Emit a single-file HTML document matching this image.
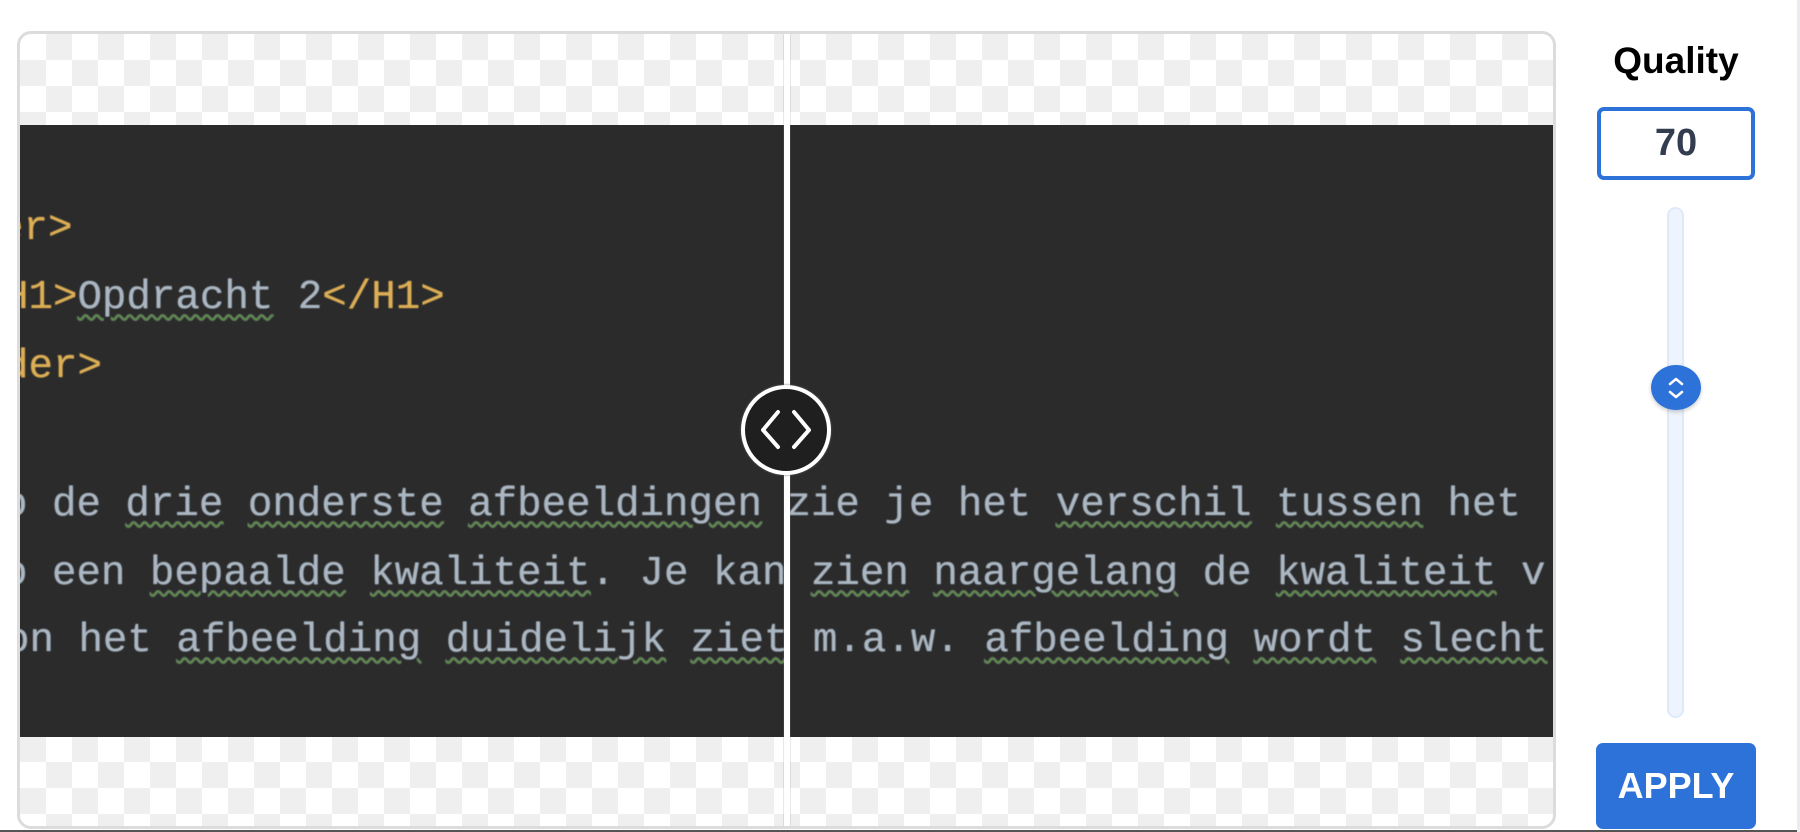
<!DOCTYPE html>
<html><head><meta charset="utf-8"><style>
html,body{margin:0;padding:0;width:1800px;height:832px;overflow:hidden;background:#fff;font-family:"Liberation Sans",sans-serif}
.box{position:absolute;left:17px;top:31px;width:1533px;height:792px;border:3px solid #dcdcdc;border-radius:14px;overflow:hidden;
background-color:#fff;background-image:linear-gradient(45deg,#efefef 25%,transparent 25%,transparent 75%,#efefef 75%),linear-gradient(45deg,#efefef 25%,transparent 25%,transparent 75%,#efefef 75%);background-size:52px 52px;background-position:0 0,26px 26px}
.dark{position:absolute;left:0;top:91px;width:100%;height:612px;background:#2b2b2b}
.t{position:absolute;font-family:"Liberation Mono",monospace;font-size:40.8px;white-space:pre;line-height:1;filter:blur(0.5px);font-weight:normal;text-shadow:0 0 1px currentColor}
.y{color:#dcae55}.g{color:#aab6c2}
.u{text-decoration:underline wavy #5c8a48;text-decoration-thickness:2px;text-underline-offset:6px}
.div{position:absolute;left:764px;top:0;width:6px;height:100%;background:#fff;box-shadow:0 0 1px #888}
.h{position:absolute;left:721px;top:351px;width:82px;height:82px;border-radius:50%;background:#1f1f1f;border:4px solid #fff;box-shadow:0 0 2px #666}
</style></head><body>
<div class="box">
<div class="dark">
<div class="t y" style="left:-21px;top:84px">er&gt;</div>
<div class="t y" style="left:-16px;top:153px">H1&gt;<span class="g u">Opdracht</span><span class="g"> 2</span>&lt;/H1&gt;</div>
<div class="t y" style="left:-16px;top:222px">der&gt;</div>
<div class="t g" style="left:-17px;top:360px">o de <span class="u">drie</span> <span class="u">onderste</span> <span class="u">afbeeldingen</span> zie je het <span class="u">verschil</span> <span class="u">tussen</span> het</div>
<div class="t g" style="left:-17px;top:429px">o een <span class="u">bepaalde</span> <span class="u">kwaliteit</span>. Je kan <span class="u">zien</span> <span class="u">naargelang</span> de <span class="u">kwaliteit</span> v</div>
<div class="t g" style="left:-15px;top:496px">on het <span class="u">afbeelding</span> <span class="u">duidelijk</span> <span class="u">ziet</span> m.a.w. <span class="u">afbeelding</span> <span class="u">wordt</span> <span class="u">slecht</span></div>
</div>
<div class="div"></div>
<div class="h"><svg width="82" height="82" viewBox="0 0 82 82" style="position:absolute;left:0;top:0"><path d="M33 23 L18 41 L33 58 M49 23 L64 41 L49 58" stroke="#fff" stroke-width="4" fill="none" stroke-linecap="round" stroke-linejoin="round"/></svg></div>
</div>
<div style="position:absolute;left:1596px;top:40px;width:160px;text-align:center;font-weight:bold;font-size:37px;color:#000">Quality</div>
<div style="position:absolute;left:1597px;top:107px;width:158px;height:73px;box-sizing:border-box;border:4px solid #2d72d9;border-radius:7px;text-align:center;font-weight:bold;font-size:38px;line-height:65px;color:#333d4f">70</div>
<div style="position:absolute;left:1667px;top:207px;width:17px;height:511px;box-sizing:border-box;background:#eef4fd;border:2px solid #dfe9f8;border-radius:9px"></div>
<div style="position:absolute;left:1651px;top:365px;width:50px;height:45px;border-radius:50%;background:#2d72d9;box-shadow:0 2px 4px rgba(0,0,0,.2)">
<svg width="50" height="45" viewBox="0 0 50 45"><path d="M19 19 L25 14 L31 19 M19 27 L25 32 L31 27" stroke="#fff" stroke-width="2.5" fill="none" stroke-linecap="round" stroke-linejoin="round"/></svg></div>
<div style="position:absolute;left:1596px;top:743px;width:160px;height:86px;background:#2d72d9;border-radius:7px;color:#fff;font-weight:bold;font-size:36px;text-align:center;line-height:86px">APPLY</div>
<div style="position:absolute;left:1797px;top:0;width:3px;height:832px;background:#ececf0"></div>
<div style="position:absolute;left:0;top:830px;width:1797px;height:2px;background:#555"></div>
</body></html>
